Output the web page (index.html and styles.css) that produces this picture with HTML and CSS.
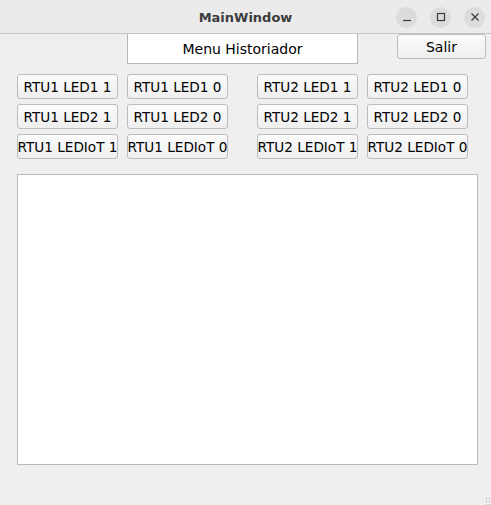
FILE: index.html
```html
<!DOCTYPE html>
<html>
<head>
<meta charset="utf-8">
<link rel="stylesheet" href="styles.css">
</head>
<body>
<div class="window">
  <header class="titlebar">
    <div></div>
    <div class="title">MainWindow</div>
    <div class="controls">
      <span class="ctl"><svg width="10" height="10" viewBox="0 0 10 10"><line x1="1" y1="8.5" x2="9" y2="8.5" stroke="#3a3a3a" stroke-width="1.2"/></svg></span>
      <span class="ctl"><svg width="10" height="10" viewBox="0 0 10 10"><rect x="1.5" y="1.5" width="7" height="7" fill="none" stroke="#3a3a3a" stroke-width="1.2"/></svg></span>
      <span class="ctl"><svg width="10" height="10" viewBox="0 0 10 10"><path d="M1.5 1.5 L8.5 8.5 M8.5 1.5 L1.5 8.5" stroke="#3a3a3a" stroke-width="1.2"/></svg></span>
    </div>
  </header>
  <div class="toprow">
    <div class="label">Menu Historiador</div>
    <button class="btn salir">Salir</button>
  </div>
  <div class="groups">
    <div class="group">
      <button class="btn">RTU1 LED1 1</button>
      <button class="btn">RTU1 LED1 0</button>
      <button class="btn">RTU1 LED2 1</button>
      <button class="btn">RTU1 LED2 0</button>
      <button class="btn">RTU1 LEDIoT 1</button>
      <button class="btn">RTU1 LEDIoT 0</button>
    </div>
    <div class="group">
      <button class="btn">RTU2 LED1 1</button>
      <button class="btn">RTU2 LED1 0</button>
      <button class="btn">RTU2 LED2 1</button>
      <button class="btn">RTU2 LED2 0</button>
      <button class="btn">RTU2 LEDIoT 1</button>
      <button class="btn">RTU2 LEDIoT 0</button>
    </div>
  </div>
  <div class="textarea"></div>
  <div class="grip"></div>
</div>
</body>
</html>
```
FILE: styles.css
```css
html, body {
  margin: 0;
  padding: 0;
  background: #efefef;
}
.window {
  width: 491px;
  height: 505px;
  position: relative;
  overflow: hidden;
  font-family: "DejaVu Sans", sans-serif;
}
.titlebar {
  height: 33px;
  background: #ebebeb;
  border-bottom: 1px solid #c4c4c4;
  display: grid;
  grid-template-columns: 1fr auto 1fr;
  align-items: center;
}
.title {
  font-family: "DejaVu Sans", sans-serif;
  font-weight: bold;
  font-size: 13px;
  color: #3c3c3c;
  padding-top: 1px;
}
.controls {
  display: flex;
  justify-content: flex-end;
  gap: 13px;
  padding-right: 6px;
  padding-top: 1px;
}
.ctl {
  width: 21px;
  height: 21px;
  border-radius: 50%;
  background: #dcdcdc;
  display: flex;
  align-items: center;
  justify-content: center;
}
.toprow {
  display: flex;
  align-items: flex-start;
  padding-left: 127px;
  gap: 39px;
  height: 30px;
}
.label {
  box-sizing: border-box;
  width: 231px;
  height: 30px;
  background: #fff;
  border: 1px solid #b8b8b8;
  border-top: none;
  display: flex;
  align-items: center;
  justify-content: center;
  font-size: 14px;
  color: #000;
}
.btn {
  box-sizing: border-box;
  width: 101px;
  height: 25px;
  margin: 0;
  padding: 0;
  border: 1px solid #bcbcbc;
  border-radius: 3px;
  background: linear-gradient(#fbfbfb, #efefef);
  font-family: "DejaVu Sans", sans-serif;
  font-size: 13.6px;
  color: #000;
  white-space: nowrap;
  overflow: hidden;
  display: flex;
  align-items: center;
  justify-content: center;
}
.salir {
  width: 89px;
  font-size: 14px;
}
.groups {
  display: flex;
  gap: 29px;
  padding-left: 17px;
  margin-top: 10px;
}
.group {
  display: grid;
  grid-template-columns: 101px 101px;
  column-gap: 9px;
  row-gap: 5px;
}
.textarea {
  box-sizing: border-box;
  margin: 15px 0 0 17px;
  width: 461px;
  height: 291px;
  background: #fff;
  border: 1px solid #bababa;
}
.grip {
  position: absolute;
  right: 0;
  bottom: 0;
  width: 6px;
  height: 8px;
  background-image: radial-gradient(circle, #b0b0b0 0.7px, transparent 0.8px);
  background-size: 3px 3px;
}
```
